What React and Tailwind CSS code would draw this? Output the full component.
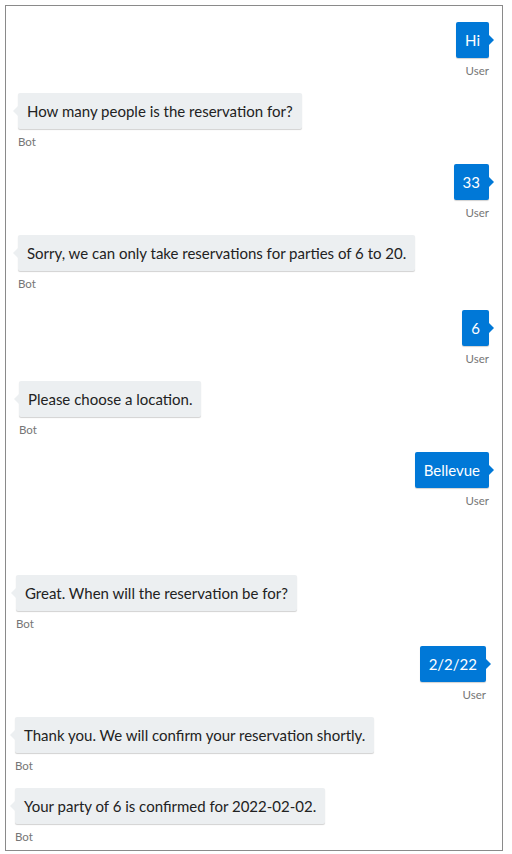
import React from 'react';

const messages = [
  { from: 'user', text: 'Hi', mt: 'mt-0', off: 'mr-0' },
  { from: 'bot', text: 'How many people is the reservation for?', mt: 'mt-[15px]', off: 'ml-0' },
  { from: 'user', text: '33', mt: 'mt-[15px]', off: 'mr-0' },
  { from: 'bot', text: 'Sorry, we can only take reservations for parties of 6 to 20.', mt: 'mt-[15px]', off: 'ml-0' },
  { from: 'user', text: '6', mt: 'mt-[19px]', off: 'mr-0' },
  { from: 'bot', text: 'Please choose a location.', mt: 'mt-[15px]', off: 'ml-[1px]' },
  { from: 'user', text: 'Bellevue', mt: 'mt-[15px]', off: 'mr-0' },
  { from: 'bot', text: 'Great. When will the reservation be for?', mt: 'mt-[67px]', off: '-ml-[2px]' },
  { from: 'user', text: '2/2/22', mt: 'mt-[15px]', off: 'mr-[3px]' },
  { from: 'bot', text: 'Thank you. We will confirm your reservation shortly.', mt: 'mt-[15px]', off: '-ml-[3px]' },
  { from: 'bot', text: 'Your party of 6 is confirmed for 2022-02-02.', mt: 'mt-[15px]', off: '-ml-[3px]' },
];

function Bubble({ m }) {
  const isUser = m.from === 'user';
  return (
    <div className={`flex flex-col ${isUser ? 'items-end' : 'items-start'} ${m.mt} ${m.off}`}>
      <div
        className={`relative h-[36px] px-[9px] flex items-center rounded-[2px] text-[15px] leading-[20px] shadow-[0_1px_1px_rgba(0,0,0,0.18)] ${
          isUser ? 'bg-[#0078d7] text-white' : 'bg-[#eceff1] text-[#222]'
        }`}
      >
        {m.text}
        {isUser ? (
          <span className="absolute right-[-5px] top-[13px] w-0 h-0 border-y-[5px] border-y-transparent border-l-[5px] border-l-[#0078d7]" />
        ) : (
          <span className="absolute left-[-5px] top-[13px] w-0 h-0 border-y-[5px] border-y-transparent border-r-[5px] border-r-[#eceff1]" />
        )}
      </div>
      <div className="mt-[6px] text-[11.5px] leading-[14px] text-[#767676]">{isUser ? 'User' : 'Bot'}</div>
    </div>
  );
}

export default function App() {
  return (
    <div className="w-[512px] h-[854px] bg-white p-[5px] pr-[9px]" style={{ fontFamily: 'Lato, "Liberation Sans", sans-serif' }}>
      <div className="h-[846px] border border-[#8a8a8a] pt-[16px] pl-[12px] pr-[13px] flex flex-col">
        {messages.map((m, i) => (
          <Bubble key={i} m={m} />
        ))}
      </div>
    </div>
  );
}
